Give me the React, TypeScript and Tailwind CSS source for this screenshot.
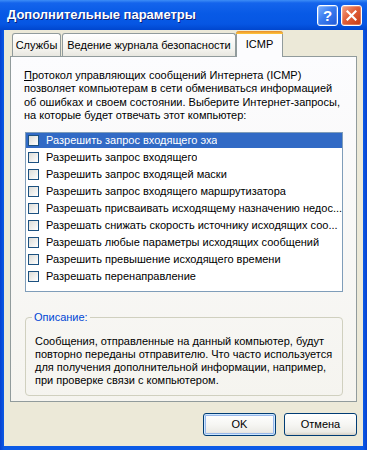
import React from 'react';

const items = [
  'Разрешить запрос входящего эха',
  'Разрешить запрос входящего',
  'Разрешить запрос входящей маски',
  'Разрешить запрос входящего маршрутизатора',
  'Разрешать присваивать исходящему назначению недос...',
  'Разрешать снижать скорость источнику исходящих соо...',
  'Разрешать любые параметры исходящих сообщений',
  'Разрешить превышение исходящего времени',
  'Разрешать перенаправление',
];

const TitleButton = ({ kind }: { kind: 'help' | 'close' }) => (
  <div
    className={`w-[21px] h-[21px] rounded-[3px] border border-white flex items-center justify-center shadow-[inset_0_0_0_1px_rgba(255,255,255,0.25)] ${
      kind === 'help'
        ? 'bg-[linear-gradient(135deg,#7DB1FF_0%,#3A7CF0_45%,#1F58D8_100%)]'
        : 'bg-[linear-gradient(135deg,#F2A488_0%,#E2603A_45%,#C53A14_100%)]'
    }`}
  >
    {kind === 'help' ? (
      <span className="text-white font-bold text-[15px] leading-none font-['Liberation_Sans',Arial,sans-serif]">?</span>
    ) : (
      <svg width="11" height="11" viewBox="0 0 11 11">
        <path d="M1.5 1.5 L9.5 9.5 M9.5 1.5 L1.5 9.5" stroke="white" strokeWidth="2.2" strokeLinecap="square" />
      </svg>
    )}
  </div>
);

const XpButton = ({ label, isDefault }: { label: string; isDefault?: boolean }) => (
  <button
    className={`w-[73px] h-[23px] rounded-[3px] border border-[#003C74] bg-[linear-gradient(to_bottom,#FFFFFF_0%,#F6F6F3_50%,#ECEBE6_85%,#D6D0C5_100%)] text-[11px] text-black ${
      isDefault ? 'shadow-[inset_0_0_0_1px_#CEE7FF,inset_0_0_0_2px_#98B8EA]' : ''
    }`}
  >
    {label}
  </button>
);

export default function App() {
  return (
    <div className="w-[367px] h-[450px] flex flex-col bg-[linear-gradient(to_right,#0842D0_0px,#0B5AE6_4px,#0B5AE6_363px,#0842D0_367px)] font-['Liberation_Sans',Arial,sans-serif] overflow-hidden select-none">
      <div className="h-[30px] flex items-center pl-[7px] pr-[5px] bg-[linear-gradient(to_bottom,#3D8DF6_0%,#1464EC_10%,#085AE6_45%,#0656E3_80%,#0046CE_100%)]">
        <span className="text-white font-bold text-[13px] [text-shadow:1px_1px_0_#0A1F7A]">
          Дополнительные параметры
        </span>
        <div className="ml-auto flex gap-[3px]">
          <TitleButton kind="help" />
          <TitleButton kind="close" />
        </div>
      </div>

      <div className="flex-1 mx-[4px] mb-[4px] bg-[#ECE9D8] flex flex-col px-[6px]">
        {/* tabs */}
        <div className="h-[26px] flex items-end pl-[2px]">
          <div className="w-[49px] h-[23px] border border-b-0 border-[#919B9C] rounded-t-[3px] bg-[linear-gradient(to_bottom,#FFFFFF,#F3F2ED_70%,#E8E7E0)] text-[11px] text-black flex items-center justify-center">
            Службы
          </div>
          <div className="ml-[1px] w-[174px] h-[23px] border border-b-0 border-[#919B9C] rounded-t-[3px] bg-[linear-gradient(to_bottom,#FFFFFF,#F3F2ED_70%,#E8E7E0)] text-[11px] text-black flex items-center justify-center">
            Ведение журнала безопасности
          </div>
          <div className="relative z-10 -mb-[1px] w-[47px] h-[26px] border-x border-[#919B9C] rounded-t-[3px] bg-[#FCFCFE] flex flex-col">
            <div className="h-[3px] rounded-t-[3px] bg-[linear-gradient(to_bottom,#E68B2C,#FFC73C)] -mx-[1px]" />
            <div className="flex-1 text-[11px] text-black flex items-start justify-center pt-[2px]">ICMP</div>
          </div>
        </div>

        {/* panel */}
        <div className="h-[346px] border border-[#919B9C] bg-[linear-gradient(to_bottom,#FCFCFE,#F5F4EF)] pl-[14px] pr-[13px] pt-[12px] flex flex-col">
          <p className="text-[11px] leading-[13.3px] text-black -ml-[1px] first-letter:underline">
            Протокол управляющих сообщений Интернета (ICMP) позволяет компьютерам в сети обмениваться информацией об
            ошибках и своем состоянии. Выберите Интернет-запросы, на которые будет отвечать этот компьютер:
          </p>

          <div className="mt-[10px] h-[160px] border border-[#7F9DB9] bg-white flex flex-col">
            {items.map((text, i) => (
              <div key={i} className="h-[17px] shrink-0">
                <div
                  className={`h-[15px] flex items-center pl-[2px] ${i === 0 ? 'bg-[#316AC5] text-white' : 'text-black'}`}
                >
                  <div className="w-[11px] h-[11px] border border-[#1C5180] bg-[linear-gradient(135deg,#DCDCD7,#FFFFFF)] shrink-0" />
                  <span className="ml-[7px] text-[11px] whitespace-nowrap overflow-hidden">{text}</span>
                </div>
              </div>
            ))}
          </div>

          <fieldset className="mt-[19px] border border-[#D0D0BF] rounded-[4px] px-0">
            <legend className="ml-[6px] px-[2px] text-[11px] leading-[13px] text-[#0046D5]">Описание:</legend>
            <p className="pl-[9px] pr-[6px] pt-[11px] pb-[8px] text-[11px] leading-[13px] text-black">
              Сообщения, отправленные на данный компьютер, будут повторно переданы отправителю. Что часто используется для
              получения дополнительной информации, например, при проверке связи с компьютером.
            </p>
          </fieldset>
        </div>

        <div className="mt-[11px] flex justify-end gap-[8px]">
          <XpButton label="OK" isDefault />
          <XpButton label="Отмена" />
        </div>
      </div>
    </div>
  );
}
